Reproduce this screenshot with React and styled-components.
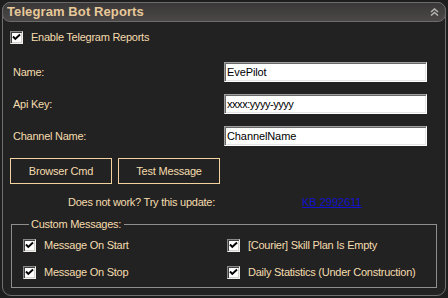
import React from "react";
import styled, { createGlobalStyle } from "styled-components";

const Global = createGlobalStyle`
  html, body { margin: 0; padding: 0; background: #1e1e1e; }
  body { width: 448px; height: 298px; overflow: hidden; font-family: "Liberation Sans", Arial, sans-serif; }
  * { box-sizing: border-box; }
`;

const Panel = styled.section`
  margin: 2px 0 0 2px;
  width: 444px;
  height: 294px;
  background: #222222;
  border: 1px solid #6f6f6f;
  border-radius: 9px;
  display: flex;
  flex-direction: column;
`;

const Header = styled.header`
  margin: -1px -1px 0;
  height: 20px;
  border: 1px solid #6c6a6a;
  border-radius: 8px;
  background: linear-gradient(#393737, #4c4848);
  display: flex;
  align-items: center;
  justify-content: space-between;
  padding: 0 6px 0 4px;
`;

const Title = styled.h1`
  margin: 0;
  font-size: 13px;
  font-weight: bold;
  color: #e8c99a;
  line-height: 16px;
  letter-spacing: 0.1px;
`;

const Body = styled.div`
  display: flex;
  flex-direction: column;
  color: #f5dcae;
  font-size: 11px;
  letter-spacing: -0.25px;
`;

const CheckRow = styled.label`
  display: flex;
  align-items: center;
  gap: 8px;
  height: 13px;
  line-height: 13px;
  margin: ${(p) => p.$mt || 0}px 0 0 ${(p) => p.$ml || 0}px;
`;

const Box = styled.span`
  width: 13px;
  height: 13px;
  flex: none;
  background: #fff;
  border-top: 1px solid #8a8a8a;
  border-left: 1px solid #8a8a8a;
  border-bottom: 1px solid #f0f0f0;
  border-right: 1px solid #f0f0f0;
  box-shadow: inset 1px 1px 0 #404040, inset -1px -1px 0 #d4d0c8;
  display: flex;
  align-items: center;
  justify-content: center;
`;

const Form = styled.div`
  display: grid;
  grid-template-columns: 211px 203px;
  row-gap: 12px;
  margin: 18px 0 0 10px;
  align-items: center;
`;

const Label = styled.span`
  line-height: 14px;
`;

const Input = styled.input`
  height: 20px;
  width: 203px;
  background: #fff;
  color: #000;
  font-family: "Liberation Sans", Arial, sans-serif;
  font-size: 11px;
  letter-spacing: ${(p) => (p.$tight ? "-0.45px" : "-0.1px")};
  padding: 0 0 0 2px;
  border-top: 1px solid #a0a0a0;
  border-left: 1px solid #a0a0a0;
  border-bottom: 1px solid #ffffff;
  border-right: 1px solid #ffffff;
  box-shadow: inset 1px 1px 0 #696969, inset -1px -1px 0 #e3e3e3;
  outline: none;
`;

const Buttons = styled.div`
  display: flex;
  gap: 6px;
  margin: 12px 0 0 7px;
`;

const Button = styled.button`
  width: 102px;
  height: 26px;
  background: transparent;
  border: 1px solid #f2d3a0;
  color: #f5dcae;
  font-family: "Liberation Sans", Arial, sans-serif;
  font-size: 11px;
  letter-spacing: -0.2px;
  padding: 0;
`;

const HelpRow = styled.div`
  display: grid;
  grid-template-columns: 212px 1fr;
  margin-top: 11px;
  line-height: 14px;
`;

const HelpText = styled.span`
  text-align: right;
`;

const Link = styled.a`
  margin-left: 87px;
  color: #1212cc;
  text-decoration: underline;
  letter-spacing: 0;
`;

const Group = styled.fieldset`
  margin: 8px 8px 0;
  padding: 8px 0 8px 11px;
  border: 1px solid #8e8e8e;
  display: grid;
  grid-template-columns: 204px 1fr;
  row-gap: 14px;
  min-width: 0;
`;

const Legend = styled.legend`
  padding: 0 3px 0 2px;
  margin-left: 6px;
  line-height: 14px;
  color: #f5dcae;
`;

const Chevrons = () => (
  <svg width="9" height="8" viewBox="0 0 9 8">
    <path d="M1 4 L4.5 1 L8 4 M1 7.5 L4.5 4.5 L8 7.5" fill="none" stroke="#b4b0b0" strokeWidth="1.6" />
  </svg>
);

const Check = () => (
  <svg width="9" height="9" viewBox="0 0 9 9">
    <path d="M1 3.5 L3.3 6 L8 1.5" fill="none" stroke="#000" strokeWidth="1.9" />
  </svg>
);

const CheckBox = ({ children, mt, ml }) => (
  <CheckRow $mt={mt} $ml={ml}>
    <Box>
      <Check />
    </Box>
    <span>{children}</span>
  </CheckRow>
);

export default function App() {
  return (
    <>
      <Global />
      <Panel>
        <Header>
          <Title>Telegram Bot Reports</Title>
          <Chevrons />
        </Header>
        <Body>
          <CheckBox mt={9} ml={7}>Enable Telegram Reports</CheckBox>
          <Form>
            <Label>Name:</Label>
            <Input defaultValue="EvePilot" />
            <Label>Api Key:</Label>
            <Input $tight defaultValue="xxxx:yyyy-yyyy" />
            <Label>Channel Name:</Label>
            <Input defaultValue="ChannelName" />
          </Form>
          <Buttons>
            <Button>Browser Cmd</Button>
            <Button>Test Message</Button>
          </Buttons>
          <HelpRow>
            <HelpText>Does not work? Try this update:</HelpText>
            <span>
              <Link href="#">KB 2992611</Link>
            </span>
          </HelpRow>
          <Group>
            <Legend>Custom Messages:</Legend>
            <CheckBox>Message On Start</CheckBox>
            <CheckBox>[Courier] Skill Plan Is Empty</CheckBox>
            <CheckBox>Message On Stop</CheckBox>
            <CheckBox>Daily Statistics (Under Construction)</CheckBox>
          </Group>
        </Body>
      </Panel>
    </>
  );
}
